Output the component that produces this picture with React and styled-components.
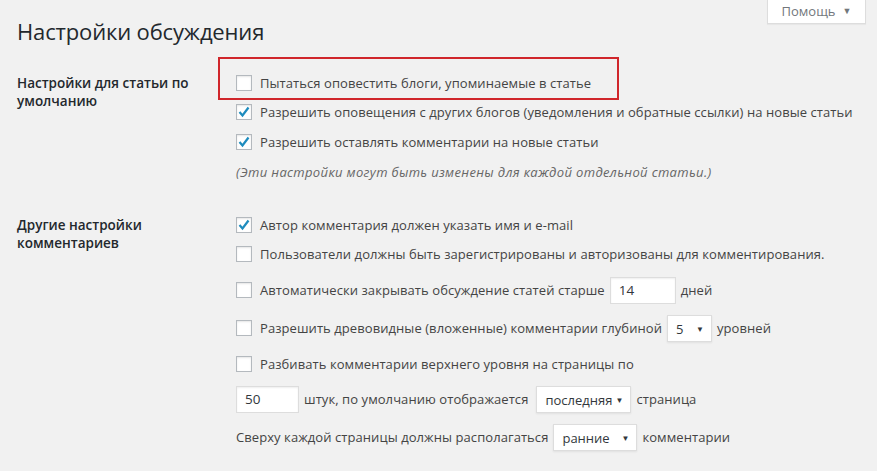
import React from 'react';
import styled, { createGlobalStyle } from 'styled-components';

const GlobalStyle = createGlobalStyle`
  html, body {
    margin: 0;
    padding: 0;
    background: #f1f1f1;
  }
  body {
    font-family: "Open Sans", "Noto Sans", sans-serif;
    font-size: 13px;
    color: #444;
  }
`;

const Page = styled.div`
  position: relative;
  width: 877px;
  height: 471px;
  overflow: hidden;
  padding: 0 0 0 17px;
  box-sizing: border-box;
`;

const HelpTab = styled.button`
  position: absolute;
  top: 0;
  left: 767px;
  width: 99px;
  height: 24px;
  background: #fff;
  border: 1px solid #ddd;
  border-top: none;
  box-shadow: 0 1px 1px rgba(0, 0, 0, 0.04);
  font-family: "Open Sans", "Noto Sans", sans-serif;
  font-size: 13px;
  color: #72777c;
  display: flex;
  align-items: center;
  justify-content: center;
  gap: 7px;
  padding: 0 0 2px;
  cursor: pointer;
`;

const Caret = styled.span`
  font-size: 9px;
  color: #72777c;
`;

const Title = styled.h1`
  margin: 0;
  padding-top: 15px;
  font-size: 22px;
  font-weight: 400;
  line-height: 32px;
  color: #23282d;
  letter-spacing: -0.15px;
`;

const Section = styled.div`
  display: grid;
  grid-template-columns: 219px 1fr;
  margin-top: ${(p) => p.$top}px;
`;

const Label = styled.div`
  font-size: 13.5px;
  font-weight: 600;
  line-height: 18px;
  color: #23282d;
  padding-top: ${(p) => p.$pad}px;
`;

const Options = styled.div`
  display: flex;
  flex-direction: column;
`;

const Row = styled.div`
  position: relative;
  display: flex;
  align-items: center;
  height: ${(p) => p.$h || 29}px;
  margin-top: ${(p) => p.$gap || 0}px;
  white-space: nowrap;
  letter-spacing: 0.07px;
`;

const Highlight = styled.div`
  position: absolute;
  left: -18px;
  top: -11px;
  width: 401px;
  height: 43px;
  border: 2px solid #d0262b;
  box-sizing: border-box;
  pointer-events: none;
`;

const Box = styled.span`
  width: 16px;
  height: 16px;
  box-sizing: border-box;
  background: #fff;
  border: 1px solid #b4b9be;
  box-shadow: inset 0 1px 2px rgba(0, 0, 0, 0.1);
  margin-right: 8px;
  flex: none;
  display: flex;
  align-items: center;
  justify-content: center;
`;

const Note = styled.div`
  font-style: italic;
  color: #666;
  height: 29px;
  margin-top: 1px;
  display: flex;
  align-items: center;
  letter-spacing: 0.35px;
`;

const TextInput = styled.div`
  width: ${(p) => p.$w}px;
  height: 27px;
  box-sizing: border-box;
  background: #fff;
  border: 1px solid #ddd;
  box-shadow: inset 0 1px 2px rgba(0, 0, 0, 0.07);
  margin: 0 5px;
  padding: 0 8px;
  display: flex;
  align-items: center;
  color: #32373c;
  font-size: 13.5px;
  flex: none;
  &:first-child {
    margin-left: 0;
  }
`;

const Select = styled.div`
  width: ${(p) => p.$w}px;
  height: 27px;
  box-sizing: border-box;
  background: #fff;
  border: 1px solid #ddd;
  box-shadow: 0 1px 2px rgba(0, 0, 0, 0.07);
  margin: 0 5px 0 ${(p) => p.$ml || 5}px;
  padding: 1px 7px 0 8px;
  display: flex;
  align-items: center;
  justify-content: space-between;
  color: #32373c;
  font-size: 13px;
  letter-spacing: 0;
  flex: none;
`;

const SelArrow = styled.span`
  font-size: 8px;
  color: #32373c;
`;

const Check = ({ checked }) => (
  <Box>
    {checked && (
      <svg width="14" height="14" viewBox="0 0 14 14">
        <polyline points="2.5,7 5.5,10.5 11.5,2.5" fill="none" stroke="#1e8cbe" strokeWidth="2.2" />
      </svg>
    )}
  </Box>
);

export default function App() {
  return (
    <Page>
      <GlobalStyle />
      <HelpTab>
        Помощь <Caret>▼</Caret>
      </HelpTab>
      <Title>Настройки обсуждения</Title>

      <Section $top={21}>
        <Label $pad={6}>Настройки для статьи по умолчанию</Label>
        <Options>
          <Row>
            <Highlight />
            <Check />
            Пытаться оповестить блоги, упоминаемые в статье
          </Row>
          <Row $h={30}>
            <Check checked />
            Разрешить оповещения с других блогов (уведомления и обратные ссылки) на новые статьи
          </Row>
          <Row>
            <Check checked />
            Разрешить оставлять комментарии на новые статьи
          </Row>
          <Note>(Эти настройки могут быть изменены для каждой отдельной статьи.)</Note>
        </Options>
      </Section>

      <Section $top={24}>
        <Label $pad={6}>Другие настройки комментариев</Label>
        <Options>
          <Row>
            <Check checked />
            Автор комментария должен указать имя и e-mail
          </Row>
          <Row>
            <Check />
            Пользователи должны быть зарегистрированы и авторизованы для комментирования.
          </Row>
          <Row $h={30} $gap={7}>
            <Check />
            Автоматически закрывать обсуждение статей старше
            <TextInput $w={66}>14</TextInput>
            дней
          </Row>
          <Row $h={30} $gap={8}>
            <Check />
            Разрешить древовидные (вложенные) комментарии глубиной
            <Select $w={45}>
              5 <SelArrow>▼</SelArrow>
            </Select>
            уровней
          </Row>
          <Row $gap={6}>
            <Check />
            Разбивать комментарии верхнего уровня на страницы по
          </Row>
          <Row $h={30} $gap={6}>
            <TextInput $w={63}>50</TextInput>
            штук, по умолчанию отображается
            <Select $w={95} $ml={8}>
              последняя <SelArrow>▼</SelArrow>
            </Select>
            страница
          </Row>
          <Row $h={30} $gap={8}>
            Сверху каждой страницы должны располагаться
            <Select $w={84}>
              ранние <SelArrow>▼</SelArrow>
            </Select>
            комментарии
          </Row>
        </Options>
      </Section>
    </Page>
  );
}
